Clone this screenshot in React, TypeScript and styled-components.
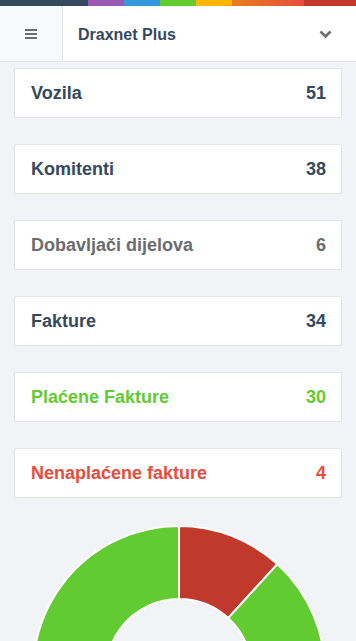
import React from 'react';
import styled, { createGlobalStyle } from 'styled-components';

const GlobalStyle = createGlobalStyle`
  html, body {
    margin: 0;
    padding: 0;
    background: #f1f3f6;
    font-family: "Liberation Sans", Arial, sans-serif;
    overflow: hidden;
  }
`;

const COLORS = {
  dark: '#34495e',
  grey: '#6a6c6f',
  green: '#62cb31',
  red: '#e74c3c',
  deepRed: '#c0392b',
  border: '#e4e5e7',
};

const Page = styled.div`
  display: flex;
  flex-direction: column;
  width: 356px;
  min-height: 641px;
`;

const ColorStrip = styled.div`
  display: grid;
  grid-template-columns: 88px 36px 36px 36px 36px 72px 1fr;
  height: 6px;
`;

const StripPart = styled.div<{ $bg: string }>`
  background: ${(p) => p.$bg};
`;

const Header = styled.header`
  display: flex;
  align-items: center;
  height: 55px;
  background: #fff;
  border-bottom: 1px solid ${COLORS.border};
`;

const MenuToggle = styled.div`
  display: flex;
  align-items: center;
  justify-content: center;
  width: 63px;
  height: 100%;
  padding-top: 1px;
  background: #f7f9fa;
  border-right: 1px solid ${COLORS.border};
  box-sizing: border-box;
`;

const Brand = styled.div`
  flex: 1;
  padding-left: 15px;
  padding-top: 3px;
  font-size: 16px;
  font-weight: 700;
  color: ${COLORS.dark};
`;

const Chevron = styled.div`
  display: flex;
  width: 28px;
  margin-right: 17px;
  padding-top: 2px;
  justify-content: center;
`;

const Content = styled.main`
  display: flex;
  flex-direction: column;
  gap: 26px;
  padding: 6px 14px 0;
`;

const StatCard = styled.div<{ $color: string }>`
  display: flex;
  align-items: center;
  justify-content: space-between;
  height: 50px;
  box-sizing: border-box;
  padding: 0 15px 0 16px;
  background: #fff;
  border: 1px solid ${COLORS.border};
  border-radius: 2px;
  color: ${(p) => p.$color};
  font-size: 18px;
  font-weight: 700;
`;

const ChartWrap = styled.div`
  display: flex;
  justify-content: center;
  margin-top: 26px;
  padding-left: 2px;
`;

const stats = [
  { label: 'Vozila', value: 51, color: COLORS.dark },
  { label: 'Komitenti', value: 38, color: COLORS.dark },
  { label: 'Dobavljači dijelova', value: 6, color: COLORS.grey },
  { label: 'Fakture', value: 34, color: COLORS.dark },
  { label: 'Plaćene Fakture', value: 30, color: COLORS.green },
  { label: 'Nenaplaćene fakture', value: 4, color: COLORS.red },
];

const R = 146;
const r = 73;
const C = R + 2;

function arc(start: number, end: number) {
  const p = (rad: number, a: number) => {
    const t = (a - 90) * (Math.PI / 180);
    return `${C + rad * Math.cos(t)} ${C + rad * Math.sin(t)}`;
  };
  const large = end - start > 180 ? 1 : 0;
  return `M ${p(R, start)} A ${R} ${R} 0 ${large} 1 ${p(R, end)} L ${p(r, end)} A ${r} ${r} 0 ${large} 0 ${p(r, start)} Z`;
}

const Donut: React.FC<{ unpaid: number; paid: number }> = ({ unpaid, paid }) => {
  const a = (unpaid / (unpaid + paid)) * 360;
  return (
    <svg width={C * 2} height={C * 2}>
      <path d={arc(0, a)} fill={COLORS.deepRed} stroke="#fff" strokeWidth={2} />
      <path d={arc(a, 359.99)} fill={COLORS.green} stroke="#fff" strokeWidth={2} />
    </svg>
  );
};

export default function App() {
  return (
    <Page>
      <GlobalStyle />
      <ColorStrip>
        <StripPart $bg="#34495e" />
        <StripPart $bg="#9b59b6" />
        <StripPart $bg="#3498db" />
        <StripPart $bg="#62cb31" />
        <StripPart $bg="#ffb606" />
        <StripPart $bg="linear-gradient(to right, #e67e22, #e74c3c)" />
        <StripPart $bg="#c0392b" />
      </ColorStrip>
      <Header>
        <MenuToggle>
          <svg width="12" height="10" viewBox="0 0 12 10">
            <rect x="0" y="0" width="12" height="2" fill={COLORS.grey} />
            <rect x="0" y="4" width="12" height="2" fill={COLORS.grey} />
            <rect x="0" y="8" width="12" height="2" fill={COLORS.grey} />
          </svg>
        </MenuToggle>
        <Brand>Draxnet Plus</Brand>
        <Chevron>
          <svg width="13" height="9" viewBox="0 0 13 9">
            <path d="M1.5 1.5 L6.5 6.5 L11.5 1.5" fill="none" stroke={COLORS.grey} strokeWidth="2.6" />
          </svg>
        </Chevron>
      </Header>
      <Content>
        {stats.map((s) => (
          <StatCard key={s.label} $color={s.color}>
            <span>{s.label}</span>
            <span>{s.value}</span>
          </StatCard>
        ))}
      </Content>
      <ChartWrap>
        <Donut unpaid={4} paid={30} />
      </ChartWrap>
    </Page>
  );
}
